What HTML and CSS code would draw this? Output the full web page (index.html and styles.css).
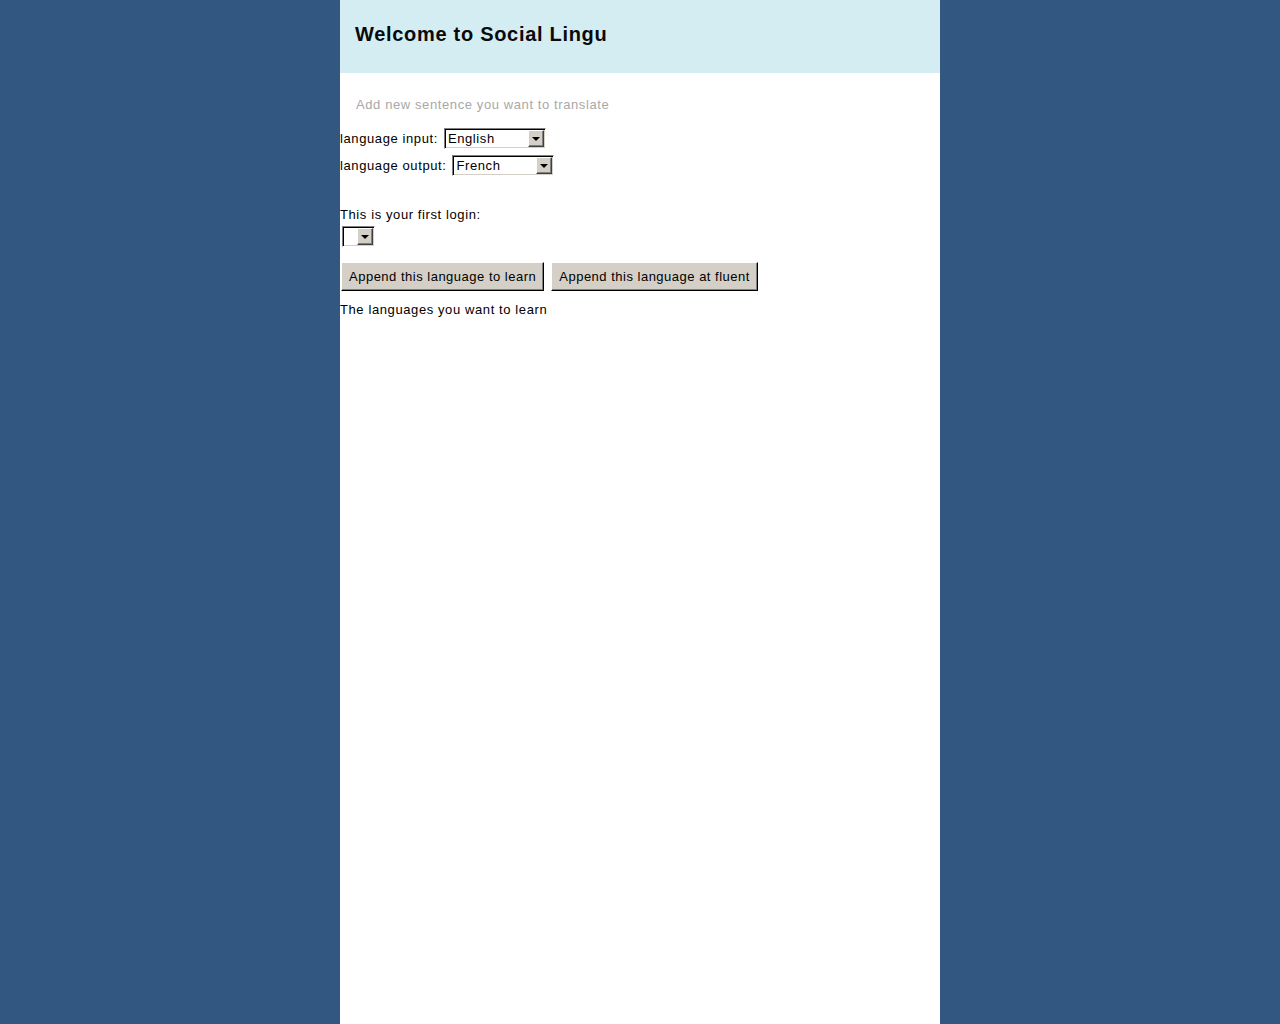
FILE: index.html
```html
<!DOCTYPE html>
<html>
<head>
<meta charset="utf-8">
<title>Social Lingu</title>
<link rel="stylesheet" href="styles.css">
</head>
<body>
<div class="page">
  <header class="header">
    <h1 class="title">Welcome to Social Lingu</h1>
  </header>
  <main class="content">
    <input class="sentence" type="text" placeholder="Add new sentence you want to translate">
    <div class="row row-first">
      <span class="label">language input:</span>
      <span class="select"><span class="select-value">English</span><span class="select-btn"><span class="tri"></span></span></span>
    </div>
    <div class="row row-second">
      <span class="label">language output:</span>
      <span class="select"><span class="select-value">French</span><span class="select-btn"><span class="tri"></span></span></span>
    </div>
    <div class="login-label">This is your first login:</div>
    <div class="row row-login">
      <span class="select select-small"><span class="select-value"></span><span class="select-btn"><span class="tri"></span></span></span>
    </div>
    <div class="buttons">
      <button class="btn" type="button">Append this language to learn</button>
      <button class="btn" type="button">Append this language at fluent</button>
    </div>
    <div class="learn">The languages you want to learn</div>
  </main>
</div>
</body>
</html>
```
FILE: styles.css
```css
html, body {
  margin: 0;
  padding: 0;
}
body {
  background: #325781;
  font-family: "Liberation Sans", Arial, sans-serif;
  font-size: 13px;
  color: #000;
}
.page {
  width: 600px;
  margin: 0 auto;
  background: #fff;
  min-height: 1024px;
}
.header {
  height: 73px;
  background: #d4edf3;
  display: flex;
  align-items: center;
  padding-left: 15px;
  box-sizing: border-box;
}
.title {
  margin: 0;
  font-size: 20px;
  font-weight: bold;
  letter-spacing: 0.7px;
  color: #0a0a0a;
  position: relative;
  top: -2px;
}
.content {
  display: flex;
  flex-direction: column;
  align-items: flex-start;
}
.sentence {
  margin-top: 20px;
  height: 22px;
  width: 400px;
  border: none;
  outline: none;
  padding: 0 0 0 16px;
  font-family: inherit;
  font-size: 13px;
  letter-spacing: 0.6px;
  background: transparent;
}
.sentence::placeholder {
  color: #a8a8a8;
}
.row {
  display: flex;
  align-items: center;
  height: 21px;
}
.row-first { margin-top: 13px; }
.row-second { margin-top: 6px; }
.label {
  margin-right: 6px;
  letter-spacing: 0.6px;
}
.select {
  display: flex;
  width: 102px;
  height: 21px;
  box-sizing: border-box;
  padding: 1px;
  border: 1px solid;
  border-color: #808080 #fff #fff #808080;
  box-shadow: inset 1px 1px 0 #000, inset -1px -1px 0 #d4d0c8;
  background: #fff;
}
.select-value {
  flex: 1;
  padding-left: 2px;
  line-height: 17px;
  letter-spacing: 0.6px;
}
.select-btn {
  width: 16px;
  box-sizing: border-box;
  background: #d4d0c8;
  border-top: 1px solid #fff;
  border-left: 1px solid #fff;
  border-right: 1px solid #404040;
  border-bottom: 1px solid #404040;
  box-shadow: inset -1px -1px 0 #808080;
  display: flex;
  align-items: center;
  justify-content: center;
}
.tri {
  width: 0;
  height: 0;
  border-left: 4px solid transparent;
  border-right: 4px solid transparent;
  border-top: 4px solid #000;
}
.login-label {
  margin-top: 31px;
  line-height: 15px;
  letter-spacing: 0.6px;
}
.row-login {
  margin-top: 4px;
  margin-left: 2px;
}
.select-small {
  width: 33px;
}
.buttons {
  display: flex;
  gap: 7px;
  margin-top: 15px;
  margin-left: 1px;
}
.btn {
  height: 29px;
  padding: 0 7px;
  background: #d4d0c8;
  font-family: inherit;
  font-size: 13px;
  letter-spacing: 0.5px;
  color: #000;
  border: 1px solid;
  border-color: #fff #000 #000 #fff;
  box-shadow: inset -1px -1px 0 #808080;
  border-radius: 0;
}
.learn {
  margin-top: 11px;
  line-height: 15px;
  letter-spacing: 0.6px;
}
```
